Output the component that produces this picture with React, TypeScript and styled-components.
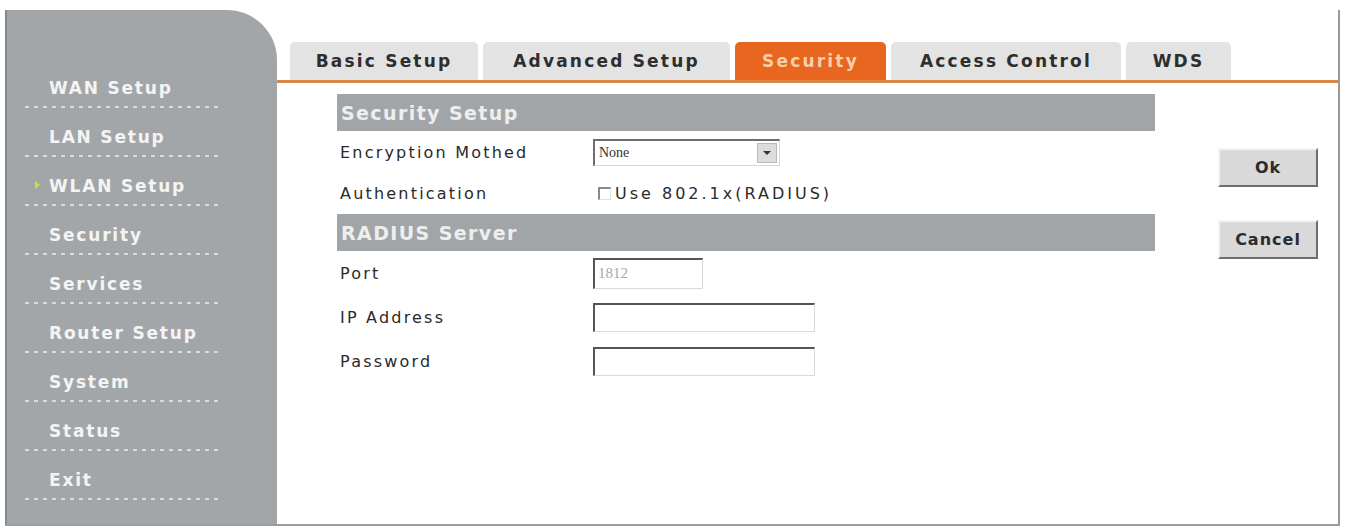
import React from 'react';
import styled, {createGlobalStyle} from 'styled-components';

const GlobalStyle = createGlobalStyle`
  html, body {
    margin: 0;
    padding: 0;
    background: #FFFFFF;
  }
  body {
    font-family: "DejaVu Sans", Verdana, sans-serif;
  }
`;

const Page = styled.div`
  padding: 10px 5px 0 5px;
  width: 1345px;
  height: 529px;
  box-sizing: border-box;
`;

const Frame = styled.div`
  display: flex;
  width: 1335px;
  height: 516px;
  box-sizing: border-box;
  border-bottom: 2px solid #9c9c9c;
`;

const Sidebar = styled.nav`
  width: 272px;
  flex-shrink: 0;
  box-sizing: border-box;
  padding-top: 49px;
  background: #a3a6a9;
  border-left: 2px solid #85888b;
  border-top-right-radius: 50px;
`;

// dotted rule under each menu entry, drawn as short dashes
const NavItem = styled.div`
  position: relative;
  height: 49px;
  box-sizing: border-box;
  margin: 0 59px 0 18px;
  padding: 19px 0 0 24px;
  background-image: repeating-linear-gradient(
    to right,
    rgba(255, 255, 255, 0.6) 0 4px,
    transparent 4px 9px
  );
  background-size: 100% 2px;
  background-position: left bottom;
  background-repeat: no-repeat;
  color: #f4f4f4;
  font-size: 17px;
  font-weight: bold;
  letter-spacing: 1.8px;
  line-height: 20px;
  white-space: nowrap;
`;

const Arrow = styled.span`
  position: absolute;
  left: 10px;
  top: 24px;
  width: 0;
  height: 0;
  border-top: 4px solid transparent;
  border-bottom: 4px solid transparent;
  border-left: 5px solid #c6e03a;
`;

const Main = styled.div`
  flex: 1;
  display: flex;
  flex-direction: column;
  border-right: 2px solid #9a9a9a;
`;

const TabBar = styled.div`
  display: flex;
  align-items: flex-end;
  gap: 5px;
  height: 70px;
  padding-left: 13px;
  border-bottom: 3px solid #d6884a;
`;

const Tab = styled.div<{$active?: boolean; $width: number}>`
  width: ${p => p.$width}px;
  height: 38px;
  display: flex;
  align-items: center;
  justify-content: center;
  border-radius: 5px 5px 0 0;
  background: ${p => (p.$active ? '#e8661f' : '#e3e3e3')};
  color: ${p => (p.$active ? '#f6cfa8' : '#2e2e2e')};
  font-size: 17px;
  font-weight: bold;
  letter-spacing: 2.2px;
  white-space: nowrap;
`;

const Body = styled.div`
  display: flex;
  flex: 1;
`;

const Form = styled.div`
  width: 818px;
  margin: 11px 0 0 60px;
`;

const SectionBar = styled.div`
  height: 37px;
  display: flex;
  align-items: center;
  padding-left: 4px;
  background: #a2a5a8;
  color: #eeeeee;
  font-size: 19px;
  font-weight: bold;
  letter-spacing: 1.4px;
`;

const Row = styled.div<{$height: number}>`
  display: grid;
  grid-template-columns: 253px 1fr;
  align-items: center;
  height: ${p => p.$height}px;
  padding-left: 3px;
`;

const Label = styled.span`
  color: #2a2a2a;
  font-size: 16px;
  letter-spacing: 2.2px;
  white-space: nowrap;
`;

const Select = styled.div`
  display: flex;
  width: 187px;
  height: 27px;
  box-sizing: border-box;
  border-top: 2px solid #6e6e6e;
  border-left: 2px solid #6e6e6e;
  border-right: 1px solid #d8d8d8;
  border-bottom: 1px solid #d8d8d8;
  background: #fff;
`;

const SelectValue = styled.span`
  flex: 1;
  padding-left: 4px;
  font-family: "Liberation Serif", serif;
  font-size: 14px;
  line-height: 24px;
  color: #333;
`;

const SelectArrow = styled.span`
  width: 18px;
  margin: 2px;
  display: flex;
  align-items: center;
  justify-content: center;
  background: #dcdcdc;
  border: 1px solid #b9b9b9;

  &::after {
    content: '';
    border-left: 4px solid transparent;
    border-right: 4px solid transparent;
    border-top: 4px solid #333;
  }
`;

const Check = styled.label`
  display: flex;
  align-items: center;
  gap: 4px;
  padding-left: 5px;
  color: #2a2a2a;
  font-size: 16px;
  letter-spacing: 3px;
  white-space: nowrap;
`;

const Box = styled.span`
  width: 10px;
  height: 10px;
  border-top: 2px solid #8a8a8a;
  border-left: 2px solid #8a8a8a;
  border-right: 1px solid #e0e0e0;
  border-bottom: 1px solid #e0e0e0;
  background: #fff;
`;

const Input = styled.div<{$width: number; $height: number}>`
  width: ${p => p.$width}px;
  height: ${p => p.$height}px;
  box-sizing: border-box;
  padding-left: 3px;
  border-top: 2px solid #555;
  border-left: 2px solid #555;
  border-right: 1px solid #dadada;
  border-bottom: 1px solid #dadada;
  background: #fff;
  font-family: "Liberation Serif", serif;
  font-size: 15px;
  line-height: 27px;
  color: #a8a8a8;
`;

const Actions = styled.div`
  display: flex;
  flex-direction: column;
  gap: 33px;
  margin: 65px 20px 0 auto;
`;

const Button = styled.button`
  width: 100px;
  height: 39px;
  padding: 0;
  background: #d9d9d9;
  border-top: 2px solid #f4f4f4;
  border-left: 2px solid #f4f4f4;
  border-right: 2px solid #6f6f6f;
  border-bottom: 2px solid #6f6f6f;
  color: #2c2c2c;
  font-family: "DejaVu Sans", Verdana, sans-serif;
  font-size: 16px;
  font-weight: bold;
  letter-spacing: 1px;
`;

const menu = ['WAN Setup', 'LAN Setup', 'WLAN Setup', 'Security', 'Services', 'Router Setup', 'System', 'Status', 'Exit'];
const tabs = [
  {label: 'Basic Setup', width: 188},
  {label: 'Advanced Setup', width: 247},
  {label: 'Security', width: 151},
  {label: 'Access Control', width: 230},
  {label: 'WDS', width: 105},
];

const App = (): JSX.Element => {
  return (
    <Page>
      <GlobalStyle/>
      <Frame>
        <Sidebar>
          {menu.map(item => (
            <NavItem key={item}>
              {item === 'WLAN Setup' && <Arrow/>}
              {item}
            </NavItem>
          ))}
        </Sidebar>
        <Main>
          <TabBar>
            {tabs.map(tab => (
              <Tab key={tab.label} $width={tab.width} $active={tab.label === 'Security'}>
                {tab.label}
              </Tab>
            ))}
          </TabBar>
          <Body>
            <Form>
              <SectionBar>Security Setup</SectionBar>
              <Row $height={42}>
                <Label>Encryption Mothed</Label>
                <Select>
                  <SelectValue>None</SelectValue>
                  <SelectArrow/>
                </Select>
              </Row>
              <Row $height={41}>
                <Label>Authentication</Label>
                <Check><Box/>Use 802.1x(RADIUS)</Check>
              </Row>
              <SectionBar>RADIUS Server</SectionBar>
              <Row $height={44}>
                <Label>Port</Label>
                <Input $width={110} $height={31}>1812</Input>
              </Row>
              <Row $height={44}>
                <Label>IP Address</Label>
                <Input $width={222} $height={29}/>
              </Row>
              <Row $height={44}>
                <Label>Password</Label>
                <Input $width={222} $height={29}/>
              </Row>
            </Form>
            <Actions>
              <Button>Ok</Button>
              <Button>Cancel</Button>
            </Actions>
          </Body>
        </Main>
      </Frame>
    </Page>
  );
};

export default App;
